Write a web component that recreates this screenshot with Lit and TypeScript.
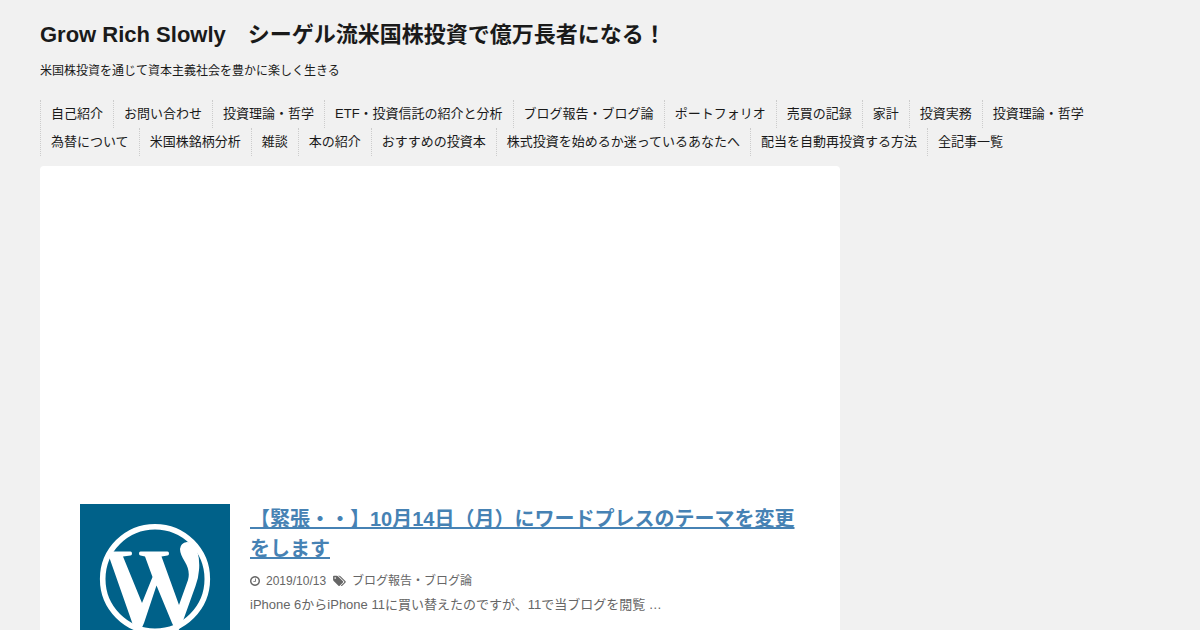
import { LitElement, html, css } from "lit";
import { customElement } from "lit/decorators.js";

const MENU = [
  "自己紹介", "お問い合わせ", "投資理論・哲学", "ETF・投資信託の紹介と分析", "ブログ報告・ブログ論",
  "ポートフォリオ", "売買の記録", "家計", "投資実務", "投資理論・哲学", "為替について", "米国株銘柄分析",
  "雑談", "本の紹介", "おすすめの投資本", "株式投資を始めるか迷っているあなたへ",
  "配当を自動再投資する方法", "全記事一覧",
];

@customElement("app-root")
export class AppRoot extends LitElement {
  static styles = css`
    :host {
      display: block;
      height: 100vh;
      overflow: hidden;
      background: #f1f1f1;
      color: #1a1a1a;
      font-family: "Liberation Sans", "Noto Sans CJK JP", sans-serif;
    }
    .wrap { max-width: 1120px; margin: 0 auto; padding: 20px 40px 0; }
    a { color: inherit; text-decoration: none; }
    .site-title { margin: 0; font-size: 22px; line-height: 30px; font-weight: bold; }
    .tagline { margin: 11px 0 19px; font-size: 12px; line-height: 20px; }
    .menu {
      display: flex; flex-wrap: wrap; list-style: none;
      margin: 0 0 10px; padding: 0; border-left: 1px dotted #ccc;
      font-size: 13px; line-height: 28px;
    }
    .menu li { padding: 0 10px; border-right: 1px dotted #ccc; }
    .menu li.end { border-right: 0; }
    .main {
      max-width: 720px; min-height: 600px; padding: 338px 40px 0;
      background: #fff; border-radius: 4px;
    }
    .post { display: flex; gap: 20px; }
    .thumb { flex: none; width: 150px; height: 150px; }
    .thumb svg { display: block; }
    .body { flex: 1; min-width: 0; color: #666; }
    .post-title { margin: 0; font-size: 20px; line-height: 30px; }
    .post-title a { color: #4682b4; text-decoration: underline; }
    .meta { display: flex; align-items: center; margin-top: 6px; font-size: 12px; line-height: 22px; }
    .meta svg { flex: none; fill: #666; margin-right: 6px; }
    .meta time { margin-right: 7px; }
    .excerpt { margin: 0; font-size: 13px; line-height: 26px; }
  `;

  render() {
    return html`
      <div class="wrap">
        <header>
          <h1 class="site-title"><a href="#">Grow Rich Slowly　シーゲル流米国株投資で億万長者になる！</a></h1>
          <p class="tagline">米国株投資を通じて資本主義社会を豊かに楽しく生きる</p>
        </header>
        <nav>
          <ul class="menu">
            ${MENU.map((m, i) => html`<li class=${i === 9 || i === 17 ? "end" : ""}><a href="#">${m}</a></li>`)}
          </ul>
        </nav>
        <main class="main">
          <article class="post">
            <a class="thumb" href="#" aria-label="WordPress">
              <svg width="150" height="150" viewBox="0 0 150 150">
                <rect width="150" height="150" fill="#006189"/>
                <circle cx="75" cy="75" r="52.3" fill="none" stroke="#fff" stroke-width="5.6"/>
                <path fill="#fff" d="M28 47.500H50.500Q52 47.500 52 49.500T50.500 51.500L43 52.500L62 99L72.500 73L65 52.500L60.500 51.500Q59 51.500 59 49.500T60.500 47.500H87.500Q89 47.500 89 49.500T87.500 51.500L81.500 52.500L99 101L108 76Q110.500 67 105 58Q100 50 100 45Q100.500 39 107 38Q114 38 117 46Q120 56 119 66Q118.500 74 115.500 82L101.500 121L97 129L92 119L76.500 81.500L64 119L60 128L54 124L29.500 54Z"/>
              </svg>
            </a>
            <div class="body">
              <h2 class="post-title"><a href="#">【緊張・・】10月14日（月）にワードプレスのテーマを変更をします</a></h2>
              <div class="meta">
                <svg width="10" height="12" viewBox="0 0 1536 1792"><path d="M896 544v448q0 14-9 23t-23 9H544q-14 0-23-9t-9-23v-64q0-14 9-23t23-9h224V544q0-14 9-23t23-9h64q14 0 23 9t9 23zm416 352q0-148-73-273t-198-198-273-73-273 73-198 198-73 273 73 273 198 198 273 73 273-73 198-198 73-273zm224 0q0 209-103 385.500T1153.500 1561 768 1664t-385.500-103T103 1281.500 0 896t103-385.500T382.500 231 768 128t385.500 103T1433 510.500 1536 896z"/></svg>
                <time datetime="2019-10-13">2019/10/13</time>
                <svg width="13" height="12" viewBox="0 0 1920 1792"><path d="M448 448q0-53-37.500-90.500T320 320t-90.500 37.500T192 448t37.500 90.500T320 576t90.500-37.500T448 448zm1067 576q0 53-37 90l-491 492q-39 37-91 37-53 0-90-37L91 890q-38-37-64.500-101T0 672V256q0-52 38-90t90-38h416q53 0 117 26.500T763 219l715 714q37 39 37 91zm384 0q0 53-37 90l-491 492q-39 37-91 37-36 0-59-14t-53-45l470-470q37-37 37-90 0-52-37-91L923 219q-38-38-102-64.500T704 128h224q53 0 117 26.500t102 64.500l715 714q37 39 37 91z"/></svg>
                <a href="#">ブログ報告・ブログ論</a>
              </div>
              <p class="excerpt">iPhone 6からiPhone 11に買い替えたのですが、11で当ブログを閲覧 …</p>
            </div>
          </article>
        </main>
      </div>
    `;
  }
}
